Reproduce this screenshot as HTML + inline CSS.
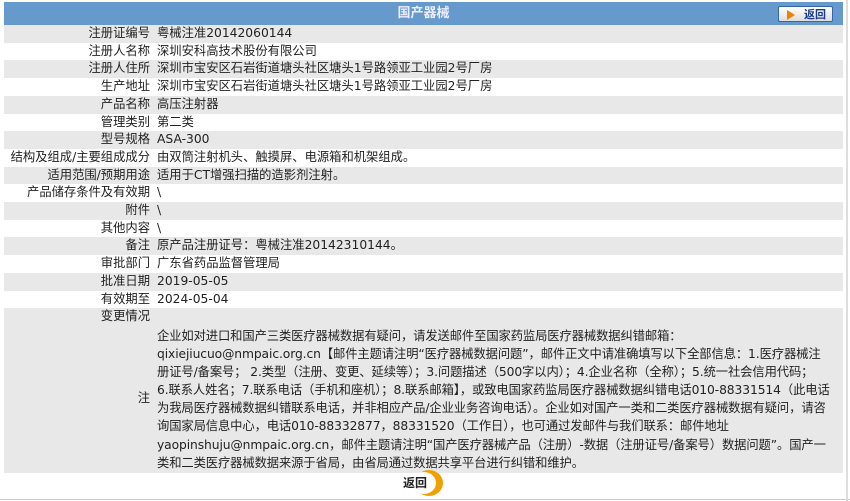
<!DOCTYPE html>
<html><head><meta charset="utf-8"><style>
body{margin:0;width:850px;height:501px;background:#fff;font-family:"DejaVu Sans","Noto Sans CJK SC",sans-serif;font-size:12.3px;color:#222;overflow:hidden;position:relative}
table{position:absolute;left:4px;top:2px;width:839px;border-collapse:collapse}
td{padding:0;height:17.7px;line-height:17.7px;white-space:nowrap}
td.l{width:146px;text-align:right;padding-right:7px}
tr.g td{background:#e8e8e8}
tr.h td{background:#6699cc;height:23px;line-height:23px;color:#eef;font-weight:bold;text-align:center;font-size:13px}
.note{white-space:normal;line-height:18.1px;padding:1px 2px 1px 0;letter-spacing:-0.1px}
.btn{position:absolute;right:10px;top:4px;width:55px;height:16px;border:1px solid #3366aa;border-radius:2px;background:linear-gradient(#fff,#ddd);font-size:11px;font-weight:bold;color:#1a3a8a;line-height:16px;text-align:right;padding-right:6px;box-sizing:border-box}
.btn:before{content:"";position:absolute;left:8px;top:3px;border-left:8px solid #f08000;border-top:5px solid transparent;border-bottom:5px solid transparent}
.bot{position:absolute;left:403px;top:474px;font-weight:bold;font-size:12px;font-family:"Noto Sans CJK SC",sans-serif}
.circ{position:absolute;left:415px;top:470px;width:28px;height:26px;border-radius:50%;background:#f0a000}
.circ2{position:absolute;left:412px;top:472px;width:24px;height:22px;border-radius:50%;background:#fff}
.line{position:absolute;left:0;top:499px;width:850px;height:1px;background:#ccc}
.sb{position:absolute;right:2px;top:0;width:2px;height:501px;background:#ddd}
</style></head><body>
<table>
<tr class="h"><td colspan="2" style="position:relative">国产器械<div class="btn">返回</div></td></tr>
<tr class="g"><td class="l">注册证编号</td><td>粤械注准20142060144</td></tr>
<tr><td class="l">注册人名称</td><td>深圳安科高技术股份有限公司</td></tr>
<tr class="g"><td class="l">注册人住所</td><td>深圳市宝安区石岩街道塘头社区塘头1号路领亚工业园2号厂房</td></tr>
<tr><td class="l">生产地址</td><td>深圳市宝安区石岩街道塘头社区塘头1号路领亚工业园2号厂房</td></tr>
<tr class="g"><td class="l">产品名称</td><td>高压注射器</td></tr>
<tr><td class="l">管理类别</td><td>第二类</td></tr>
<tr class="g"><td class="l">型号规格</td><td>ASA-300</td></tr>
<tr><td class="l">结构及组成/主要组成成分</td><td>由双筒注射机头、触摸屏、电源箱和机架组成。</td></tr>
<tr class="g"><td class="l">适用范围/预期用途</td><td>适用于CT增强扫描的造影剂注射。</td></tr>
<tr><td class="l">产品储存条件及有效期</td><td>\</td></tr>
<tr class="g"><td class="l">附件</td><td>\</td></tr>
<tr><td class="l">其他内容</td><td>\</td></tr>
<tr class="g"><td class="l">备注</td><td>原产品注册证号：粤械注准20142310144。</td></tr>
<tr><td class="l">审批部门</td><td>广东省药品监督管理局</td></tr>
<tr class="g"><td class="l">批准日期</td><td>2019-05-05</td></tr>
<tr><td class="l">有效期至</td><td>2024-05-04</td></tr>
<tr class="g"><td class="l">变更情况</td><td></td></tr>
<tr class="g"><td class="l">注</td><td class="note">企业如对进口和国产三类医疗器械数据有疑问，请发送邮件至国家药监局医疗器械数据纠错邮箱：<br>qixiejiucuo@nmpaic.org.cn【邮件主题请注明“医疗器械数据问题”，邮件正文中请准确填写以下全部信息：1.医疗器械注<br>册证号/备案号； 2.类型（注册、变更、延续等）；3.问题描述（500字以内）；4.企业名称（全称）；5.统一社会信用代码；<br>6.联系人姓名；7.联系电话（手机和座机）；8.联系邮箱】，或致电国家药监局医疗器械数据纠错电话010-88331514（此电话<br>为我局医疗器械数据纠错联系电话，并非相应产品/企业业务咨询电话）。企业如对国产一类和二类医疗器械数据有疑问，请咨<br>询国家局信息中心，电话010-88332877，88331520（工作日），也可通过发邮件与我们联系：邮件地址<br>yaopinshuju@nmpaic.org.cn，邮件主题请注明“国产医疗器械产品（注册）-数据（注册证号/备案号）数据问题”。国产一<br>类和二类医疗器械数据来源于省局，由省局通过数据共享平台进行纠错和维护。</td></tr>
</table>
<div class="circ"></div><div class="circ2"></div>
<div class="bot">返回</div>
<div class="line"></div><div class="sb"></div>
</body></html>
